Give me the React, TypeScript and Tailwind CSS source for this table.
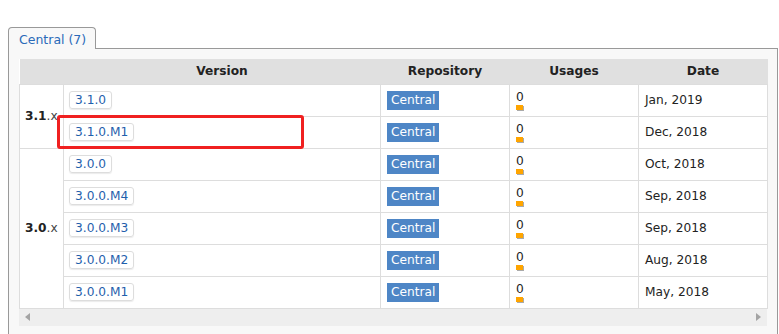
import React from "react";

type Row = { v: string; date: string };

const groups: { label: string; rows: Row[] }[] = [
  {
    label: "3.1",
    rows: [
      { v: "3.1.0", date: "Jan, 2019" },
      { v: "3.1.0.M1", date: "Dec, 2018" },
    ],
  },
  {
    label: "3.0",
    rows: [
      { v: "3.0.0", date: "Oct, 2018" },
      { v: "3.0.0.M4", date: "Sep, 2018" },
      { v: "3.0.0.M3", date: "Sep, 2018" },
      { v: "3.0.0.M2", date: "Aug, 2018" },
      { v: "3.0.0.M1", date: "May, 2018" },
    ],
  },
];

export default function App() {
  return (
    <div
      className="w-[779px] h-[334px] overflow-hidden bg-white text-[12.2px] text-[#222]"
      style={{ fontFamily: '"DejaVu Sans", Verdana, sans-serif' }}
    >
      <div className="pt-[27px] pl-[8px]">
        <div className="flex">
          <div className="relative z-10 -mb-px h-[22px] w-[88px] rounded-t-[4px] border border-b-0 border-[#999] bg-[#f8f8f8] pl-[10px] pt-[3px] text-[12.5px] text-[#2a6ab8]">
            Central (7)
          </div>
        </div>
        <div className="relative h-[300px] w-[770px] border border-[#999] bg-[#f8f8f8] px-[10px] pt-[10px]">
          <table className="w-[748px] table-fixed border-collapse bg-white">
            <colgroup>
              <col className="w-[44px]" />
              <col className="w-[317px]" />
              <col className="w-[129px]" />
              <col className="w-[129px]" />
              <col className="w-[129px]" />
            </colgroup>
            <thead>
              <tr className="h-[25px] bg-[#e0e0e0] font-bold">
                <th></th>
                <th className="text-center">Version</th>
                <th className="text-center">Repository</th>
                <th className="text-center">Usages</th>
                <th className="text-center">Date</th>
              </tr>
            </thead>
            <tbody>
              {groups.map((g) =>
                g.rows.map((r, i) => (
                  <tr key={r.v} className="h-[32px]">
                    {i === 0 && (
                      <td
                        rowSpan={g.rows.length}
                        className="border border-[#ddd] pl-[5px] align-middle"
                      >
                        <span className="font-bold">{g.label}</span>
                        <span className="text-[#444]">.x</span>
                      </td>
                    )}
                    <td className="border border-[#ddd] pl-[5px] align-middle">
                      <span className="inline-block h-[18px] rounded-[3px] border border-[#ddd] px-[5px] leading-[16px] text-[#1f60ac] shadow-[0_1px_1px_rgba(0,0,0,0.08)]">
                        {r.v}
                      </span>
                    </td>
                    <td className="border border-[#ddd] pl-[6px] align-middle">
                      <span className="inline-block h-[19px] bg-[#4e86c6] px-[4px] leading-[19px] text-white">
                        Central
                      </span>
                    </td>
                    <td className="border border-[#ddd] pl-[6px] align-middle">
                      <div className="flex flex-col leading-[12px]">
                        <span className="text-[#222]">0</span>
                        <span className="mt-[2px] block h-[5px] w-[7px] bg-[#ffa500] shadow-[1px_1px_0_#aaa]"></span>
                      </div>
                    </td>
                    <td className="border border-[#ddd] pl-[6px] align-middle">
                      {r.date}
                    </td>
                  </tr>
                ))
              )}
            </tbody>
          </table>
          <div className="flex h-[17px] w-[748px] items-center justify-between bg-[#eeeeee] px-[6px]">
            <svg width="5" height="8" viewBox="0 0 5 8">
              <path d="M5 0 L0 4 L5 8 Z" fill="#a3a3a3" />
            </svg>
            <svg width="5" height="8" viewBox="0 0 5 8">
              <path d="M0 0 L5 4 L0 8 Z" fill="#a3a3a3" />
            </svg>
          </div>
          <div className="pointer-events-none absolute left-[48px] top-[66px] h-[34px] w-[247px] rounded-[3px] border-[3px] border-[#f02020]"></div>
        </div>
      </div>
    </div>
  );
}
